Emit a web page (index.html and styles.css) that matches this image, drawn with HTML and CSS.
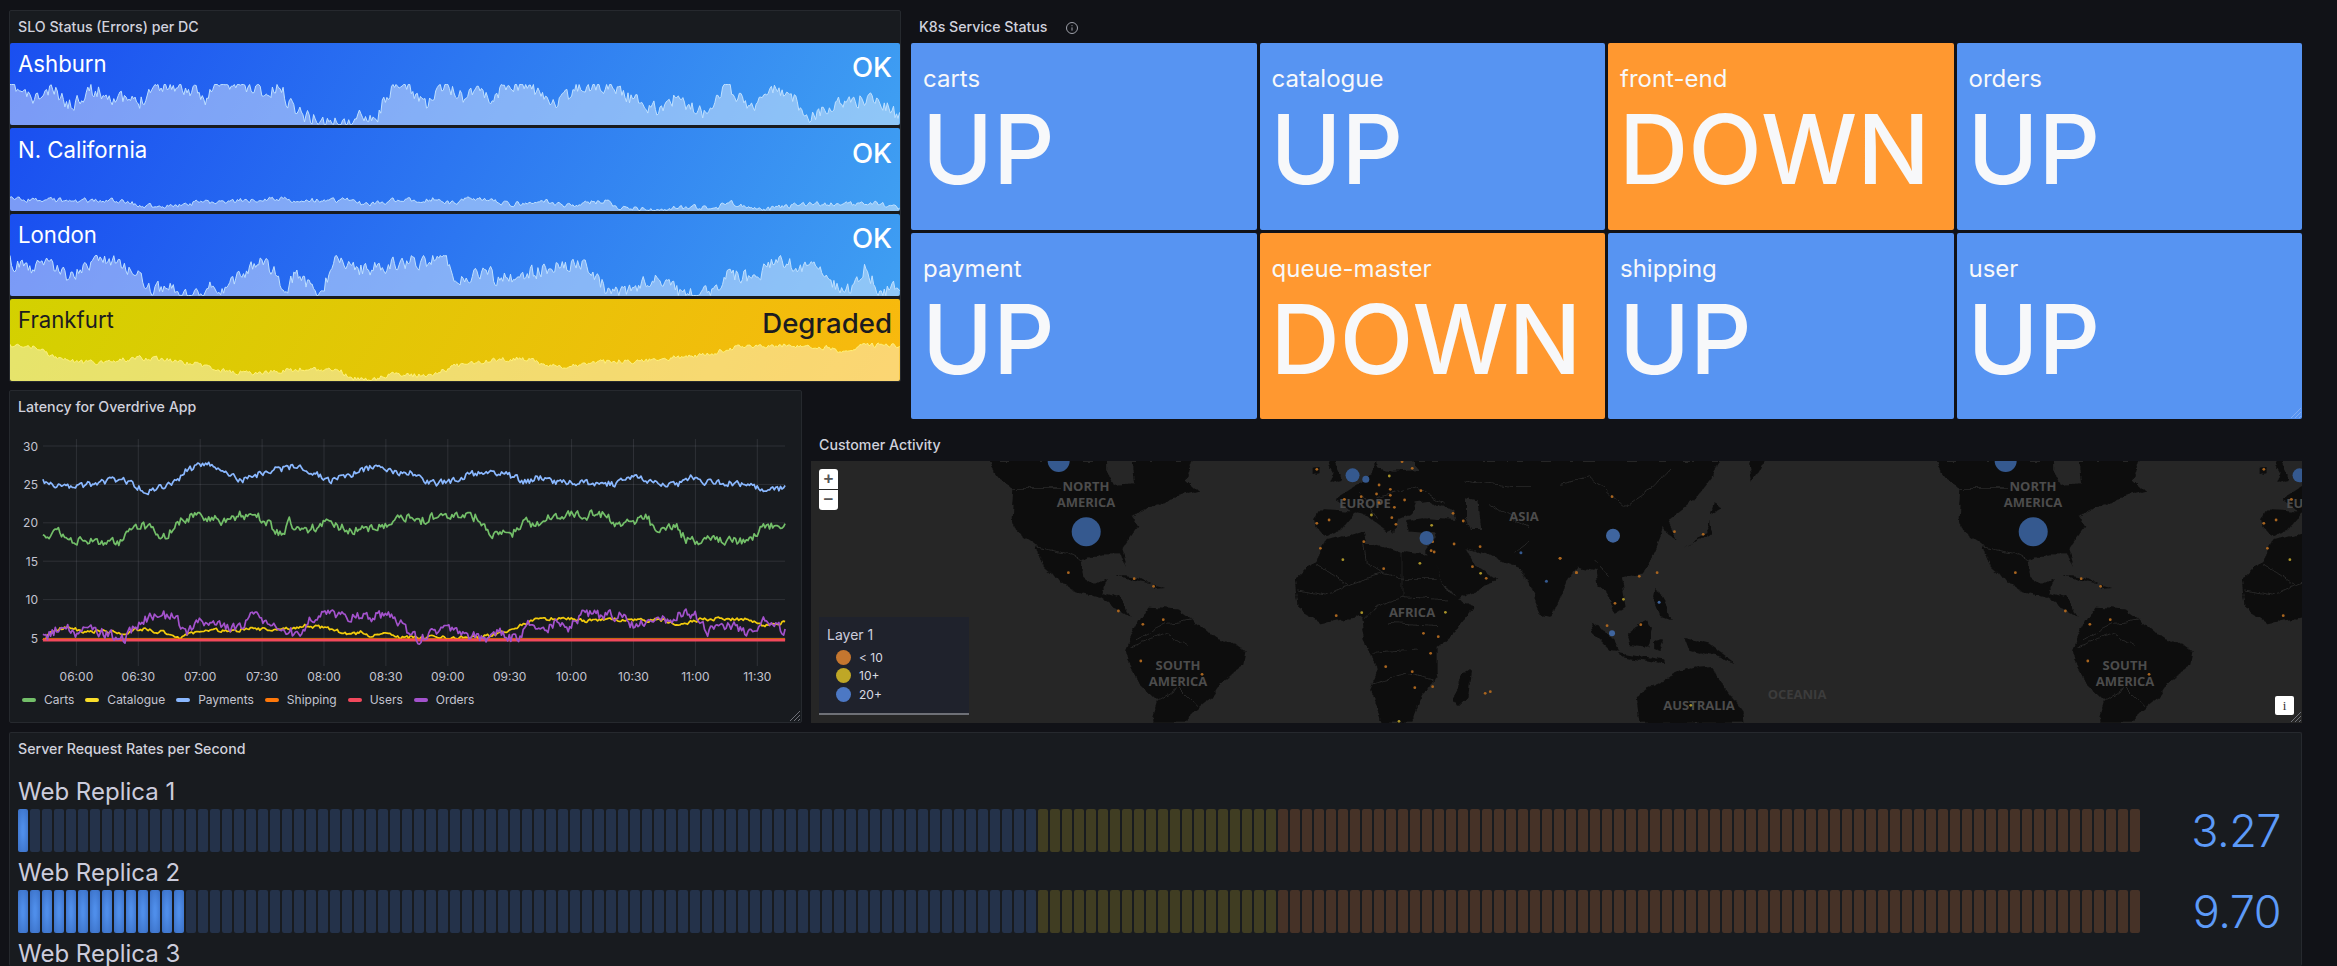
FILE: index.html
```html
<!DOCTYPE html>
<html lang="en">

<head>
    <meta charset="UTF-8" />
    <title>Overdrive App Dashboard</title>
    <link rel="stylesheet" href="styles.css">
</head>

<body>

    <div class="dash">

        <section class="panel slo">
            <h2 class="panel-title">SLO Status (Errors) per DC</h2>
            <div class="slo-rows">
                <div class="slo-row slo-ok">
                    <div class="slo-head"><span class="slo-name">Ashburn</span><span class="slo-value">OK</span></div>
                    <svg class="spark" id="spark-ashburn" width="890" height="41"></svg>
                </div>
                <div class="slo-row slo-ok">
                    <div class="slo-head"><span class="slo-name">N. California</span><span class="slo-value">OK</span></div>
                    <svg class="spark" id="spark-california" width="890" height="41"></svg>
                </div>
                <div class="slo-row slo-ok">
                    <div class="slo-head"><span class="slo-name">London</span><span class="slo-value">OK</span></div>
                    <svg class="spark" id="spark-london" width="890" height="41"></svg>
                </div>
                <div class="slo-row slo-warn">
                    <div class="slo-head"><span class="slo-name">Frankfurt</span><span class="slo-value">Degraded</span></div>
                    <svg class="spark" id="spark-frankfurt" width="890" height="41"></svg>
                </div>
            </div>
        </section>

        <section class="k8s">
            <h2 class="panel-title k8s-title">K8s Service Status
                <svg class="info-icon" width="14" height="14" viewBox="0 0 14 14">
                    <circle cx="7" cy="7" r="5.5" fill="none" stroke="#9fa1aa" stroke-width="1"></circle>
                    <path d="M7 6.4v3.2M7 4.2v1" stroke="#9fa1aa" stroke-width="1"></path>
                </svg>
            </h2>
            <div class="tiles">
                <div class="tile"><div class="tile-name">carts</div><div class="tile-value">UP</div></div>
                <div class="tile"><div class="tile-name">catalogue</div><div class="tile-value">UP</div></div>
                <div class="tile tile-down"><div class="tile-name">front-end</div><div class="tile-value">DOWN</div></div>
                <div class="tile"><div class="tile-name">orders</div><div class="tile-value">UP</div></div>
                <div class="tile"><div class="tile-name">payment</div><div class="tile-value">UP</div></div>
                <div class="tile tile-down"><div class="tile-name">queue-master</div><div class="tile-value">DOWN</div></div>
                <div class="tile"><div class="tile-name">shipping</div><div class="tile-value">UP</div></div>
                <div class="tile"><div class="tile-name">user</div><div class="tile-value">UP</div></div>
            </div>
            <svg class="resize-handle tile-handle" width="12" height="12" viewBox="0 0 12 12">
                <path d="M1 11 11 1M5 11l6-6M9 11l2-2" stroke="#9dbff5" fill="none"></path>
            </svg>
        </section>

        <section class="panel latency">
            <h2 class="panel-title">Latency for Overdrive App</h2>
            <svg class="latency-chart" id="latency-chart" width="791" height="262"></svg>
            <div class="legend">
                <span class="legend-item"><i class="swatch swatch-green"></i>Carts</span>
                <span class="legend-item"><i class="swatch swatch-yellow"></i>Catalogue</span>
                <span class="legend-item"><i class="swatch swatch-blue"></i>Payments</span>
                <span class="legend-item"><i class="swatch swatch-orange"></i>Shipping</span>
                <span class="legend-item"><i class="swatch swatch-red"></i>Users</span>
                <span class="legend-item"><i class="swatch swatch-purple"></i>Orders</span>
            </div>
            <svg class="resize-handle" width="12" height="12" viewBox="0 0 12 12">
                <path d="M1 11 11 1M5 11l6-6M9 11l2-2" stroke="#6e7077" fill="none"></path>
            </svg>
        </section>

        <section class="activity">
            <h2 class="panel-title activity-title">Customer Activity</h2>
            <div class="map">
                <svg class="map-svg" id="map-svg" width="1491" height="262">
                    <defs>
                        <filter id="rough" x="-5%" y="-5%" width="110%" height="110%">
                            <feTurbulence type="fractalNoise" baseFrequency=".07" numOctaves="3" seed="4"></feTurbulence>
                            <feDisplacementMap in="SourceGraphic" scale="7" xChannelSelector="R" yChannelSelector="G"></feDisplacementMap>
                        </filter>
                        <g id="world">
                            <g filter="url(#rough)">
                                <!-- americas, europe, africa, west asia -->
                                <g transform="translate(-11,-41) scale(.5102,.3333)">
                                    <path class="land" d="M372,123 L385,170 L418,205 L415,295 L435,350 L465,385 L478,430 L510,490 L550,520 L590,530 L615,560 L650,590 L640,570 L625,530 L590,520 L605,480 L575,495 L555,470 L552,420 L590,400 L625,400 L640,440 L632,385 L665,320 L650,290 L690,262 L745,225 L782,215 L755,175 L770,123 Z"></path>
                                    <path class="land" d="M460,380 L472,385 L492,460 L478,440 Z"></path>
                                    <path class="land" d="M620,465 L650,468 L690,490 L655,482 Z M692,497 L716,504 L695,506 Z"></path>
                                    <path class="land" d="M640,690 L650,640 L670,590 L685,560 L740,565 L770,600 L800,640 L875,690 L870,740 L830,780 L800,840 L770,880 L760,908 L690,908 L700,840 L660,780 L640,700 Z"></path>
                                    <path class="land" d="M970,480 L1010,420 L1030,360 L1105,335 L1110,370 L1180,395 L1235,405 L1270,520 L1320,560 L1280,640 L1250,680 L1250,760 L1210,850 L1200,908 L1140,908 L1118,810 L1130,750 L1105,660 L1100,590 L1020,610 L975,560 Z"></path>
                                    <path class="land" d="M1300,760 L1315,750 L1310,830 L1290,860 L1280,840 Z"></path>
                                    <path class="land" d="M1010,290 L1020,268 L1085,272 L1090,275 L1060,330 L1030,350 L1012,320 Z"></path>
                                    <path class="land" d="M1050,240 L1090,195 L1125,160 L1130,123 L1600,123 L1600,430 L1560,450 L1520,440 L1500,490 L1470,590 L1450,585 L1432,500 L1415,450 L1385,425 L1340,400 L1305,385 L1330,440 L1365,480 L1290,540 L1262,490 L1238,420 L1225,392 L1240,362 L1245,340 L1195,335 L1190,300 L1225,295 L1285,300 L1280,275 L1235,245 L1205,250 L1198,285 L1170,298 L1165,335 L1140,290 L1125,262 L1165,322 L1150,335 L1105,280 L1085,275 Z"></path>
                                    <path class="land" d="M1035,123 L1050,123 L1062,180 L1035,186 L1044,160 Z M1005,140 L1020,138 L1020,160 L1005,162 Z"></path>
                                    <path class="sea" d="M600,123 L650,123 L655,190 L615,195 L600,150 Z"></path>
                                    <path class="sea" d="M1130,123 L1200,123 L1215,150 L1160,155 L1135,145 Z"></path>
                                    <path class="sea" d="M1305,235 L1330,240 L1335,330 L1315,330 L1305,290 Z"></path>
                                    <path class="border" d="M418,205 L512,205 M455,378 L520,400 L555,425"></path>
                                    <path class="border" d="M1010,430 L1075,495 L1140,460 L1180,475 L1250,475 M1105,370 L1110,430 L1140,460 M1180,395 L1180,530 M975,510 L1030,525 L1075,495 M1105,600 L1130,560 L1180,530 L1270,540 M1155,610 L1250,620 M1120,700 L1210,690 M1120,790 L1190,760 L1240,780"></path>
                                    <path class="border" d="M660,660 L720,610 L770,600 M650,680 L720,640 L760,680 M700,840 L740,800 L780,860"></path>
                                    <path class="border" d="M1300,180 L1400,200 L1505,200 L1560,123 M1350,250 L1450,340 L1400,400 M1130,230 L1210,200 L1260,250 M1100,220 L1130,290"></path>
                                </g>
                                <!-- east asia and the pacific -->
                                <g transform="translate(749,-41) scale(.4955,.3333)">
                                    <path class="land" d="M-60,123 L320,123 L305,175 L268,240 L220,300 L235,358 L205,325 L190,400 L170,460 L125,472 L132,560 L112,582 L92,510 L78,500 L72,425 L30,430 L-60,440 Z"></path>
                                    <path class="land" d="M380,123 L415,123 L385,185 Z"></path>
                                    <path class="land" d="M250,385 L295,340 L300,300 L308,342 L262,372 Z M310,250 L325,265 L305,285 Z"></path>
                                    <path class="land" d="M192,505 L205,520 L225,600 L200,590 L190,540 Z"></path>
                                    <path class="land" d="M135,640 L175,600 L185,620 L180,680 L140,675 Z"></path>
                                    <path class="land" d="M60,605 L90,630 L118,692 L100,690 L65,640 Z"></path>
                                    <path class="land" d="M115,700 L210,718 L212,730 L125,712 Z"></path>
                                    <path class="land" d="M190,660 L210,655 L205,695 L190,690 Z"></path>
                                    <path class="land" d="M250,658 L300,670 L352,732 L300,700 L262,690 Z"></path>
                                    <path class="land" d="M155,830 L240,752 L280,740 L310,738 L330,800 L368,870 L370,908 L160,908 Z"></path>
                                    <path class="border" d="M0,190 L60,170 L130,260 L190,200 L220,150 M70,420 L100,470"></path>
                                </g>
                            </g>
                            <g class="map-labels">
                                <text x="275" y="30">NORTH</text>
                                <text x="275" y="46">AMERICA</text>
                                <text x="554" y="47">EUROPE</text>
                                <text x="713" y="60">ASIA</text>
                                <text x="601" y="156">AFRICA</text>
                                <text x="367" y="209">SOUTH</text>
                                <text x="367" y="225">AMERICA</text>
                                <text x="888" y="249">AUSTRALIA</text>
                            </g>
                        </g>
                    </defs>
                    <use href="#world"></use>
                    <use href="#world" x="947"></use>
                    <text class="ocean-label" x="986" y="238">OCEANIA</text>
                    <g id="map-dots"></g>
                </svg>
                <div class="zoom-ctl">
                    <button class="zoom-btn">+</button>
                    <button class="zoom-btn">−</button>
                </div>
                <div class="map-legend">
                    <div class="map-legend-title">Layer 1</div>
                    <div class="map-legend-row"><i class="dot dot-orange"></i>&lt; 10</div>
                    <div class="map-legend-row"><i class="dot dot-yellow"></i>10+</div>
                    <div class="map-legend-row"><i class="dot dot-blue"></i>20+</div>
                </div>
                <button class="map-info">i</button>
                <svg class="resize-handle" width="12" height="12" viewBox="0 0 12 12">
                    <path d="M1 11 11 1M5 11l6-6M9 11l2-2" stroke="#6e7077" fill="none"></path>
                </svg>
            </div>
        </section>

        <section class="panel requests">
            <h2 class="panel-title">Server Request Rates per Second</h2>
            <div class="gauges">
                <div class="gauge">
                    <div class="gauge-name">Web Replica 1</div>
                    <div class="gauge-bar">
                        <div class="cells" data-lit="1"></div>
                        <div class="gauge-value">3.27</div>
                    </div>
                </div>
                <div class="gauge">
                    <div class="gauge-name">Web Replica 2</div>
                    <div class="gauge-bar">
                        <div class="cells" data-lit="14"></div>
                        <div class="gauge-value">9.70</div>
                    </div>
                </div>
                <div class="gauge">
                    <div class="gauge-name">Web Replica 3</div>
                </div>
            </div>
        </section>

    </div>

    <script src="chart.js"></script>
</body>

</html>
```

FILE: styles.css
```css
html,
body {
    height: 966px;
    overflow: hidden;
}

body {
    margin: 0;
    background-color: #111217;
    color: #ccccdc;
    font-family: Inter, "Liberation Sans", sans-serif;
}

.dash {
    display: grid;
    grid-template-columns: 794px 100px 1399px;
    grid-template-rows: 372px 8px 29px 11px 293px auto;
    padding: 10px 0 0 9px;
}

.panel {
    position: relative;
    background-color: #181b1f;
    border: 1px solid #26292e;
    border-radius: 2px;
    box-sizing: border-box;
}

.panel-title {
    margin: 0;
    padding-left: 8px;
    height: 32px;
    line-height: 32px;
    font-size: 14.2px;
    font-weight: 500;
    color: #d0d1dc;
}

/* SLO */

.slo {
    grid-column: 1 / 3;
    grid-row: 1;
    margin-right: 2px;
    display: flex;
    flex-direction: column;
}

.slo-rows {
    flex: 1;
    min-height: 0;
    display: grid;
    grid-template-rows: repeat(4, minmax(0, 1fr));
    gap: 3px;
}

.slo-row {
    display: flex;
    flex-direction: column;
    justify-content: flex-end;
    border-radius: 2px;
    overflow: hidden;
}

.slo-ok {
    background: linear-gradient(120deg, #1a4ff0, #3f9ff2);
    color: #fff;
}

.slo-warn {
    background: linear-gradient(120deg, #d3d100, #f9b80e);
    color: #1c1c20;
}

.slo-head {
    height: 41px;
    box-sizing: border-box;
    display: flex;
    justify-content: space-between;
    padding: 7px 8px 0 8px;
}

.slo-name {
    font-size: 22.2px;
    line-height: 28px;
}

.slo-value {
    font-size: 27.6px;
    line-height: 34px;
    font-weight: 500;
}

.spark {
    display: block;
    flex-shrink: 0;
}

/* K8s */

.k8s {
    position: relative;
    grid-column: 3;
    grid-row: 1 / 4;
    padding-left: 8px;
}

.k8s-title {
    height: 33px;
    line-height: 33px;
}

.info-icon {
    vertical-align: -3px;
    margin-left: 14px;
}

.tiles {
    display: grid;
    grid-template-columns: repeat(4, 1fr);
    grid-template-rows: 187px 186px;
    gap: 3px;
}

.tile {
    background-color: #5794f2;
    color: #f7f8fa;
    border-radius: 2px;
    padding: 22px 12px 0;
    overflow: hidden;
}

.tile-down {
    background-color: #ff9830;
}

.tile-name {
    font-size: 24px;
    line-height: 28px;
}

.tile-value {
    font-size: 96px;
    font-weight: 500;
    line-height: 96px;
    margin-top: 8px;
    margin-left: -1px;
}

/* Latency */

.latency {
    grid-column: 1;
    grid-row: 3 / 6;
    margin-right: 1px;
}

.latency-chart {
    display: block;
}

.latency-chart text {
    font-family: Inter, "Liberation Sans", sans-serif;
    font-size: 12px;
    fill: #c3c4d0;
}

.legend {
    display: flex;
    gap: 11px;
    padding-left: 12px;
    margin-top: 7px;
    font-size: 12px;
    line-height: 16px;
    color: #c3c4d0;
}

.legend-item {
    display: flex;
    align-items: center;
}

.swatch {
    width: 14px;
    height: 4px;
    border-radius: 2px;
    margin-right: 8px;
}

.swatch-green { background-color: #73bf69; }
.swatch-yellow { background-color: #fade2a; }
.swatch-blue { background-color: #8ab8ff; }
.swatch-orange { background-color: #ff780a; }
.swatch-red { background-color: #f2495c; }
.swatch-purple { background-color: #a352cc; }

.resize-handle {
    position: absolute;
    right: 0;
    bottom: 0;
}

.tile-handle {
    opacity: 0.6;
}

/* Map */

.activity {
    grid-column: 2 / 4;
    grid-row: 3 / 6;
    padding-left: 8px;
    display: flex;
    flex-direction: column;
    justify-content: flex-end;
}

.activity-title {
    height: 31px;
    line-height: 29px;
}

.map {
    position: relative;
    height: 262px;
    background-color: #262626;
    overflow: hidden;
}

.map-svg {
    display: block;
}

.land { fill: #0c0c0c; }
.sea { fill: #262626; }

.border {
    fill: none;
    stroke: #272727;
    stroke-width: 1;
    vector-effect: non-scaling-stroke;
}

.map-labels text,
.ocean-label {
    font-family: "Open Sans", Inter, sans-serif;
    font-size: 13px;
    font-weight: 700;
    text-anchor: middle;
    fill: #4c4c4c;
}

.ocean-label {
    fill: #3c3c3c;
}

.zoom-ctl {
    position: absolute;
    left: 8px;
    top: 8px;
    display: flex;
    flex-direction: column;
    gap: 1px;
    border-radius: 3px;
    overflow: hidden;
}

.zoom-btn {
    width: 19px;
    height: 20px;
    padding: 0;
    border: none;
    background-color: #fff;
    color: #555;
    font-family: "Liberation Sans", sans-serif;
    font-size: 17px;
    font-weight: 700;
    line-height: 20px;
}

.map-legend {
    position: absolute;
    left: 8px;
    top: 156px;
    width: 150px;
    height: 98px;
    box-sizing: border-box;
    padding: 8px;
    background-color: #1f222c;
    border-bottom: 2px solid #6e7077;
}

.map-legend-title {
    font-size: 14px;
    line-height: 20px;
    margin-bottom: 3px;
}

.map-legend-row {
    display: flex;
    align-items: center;
    height: 18.5px;
    font-size: 12px;
    color: #d8d9e2;
}

.dot {
    width: 15px;
    height: 15px;
    border-radius: 50%;
    margin: 0 8px 0 9px;
}

.dot-orange { background-color: #c4762f; }
.dot-yellow { background-color: #bfa726; }
.dot-blue { background-color: #4c78c4; }

.map-info {
    position: absolute;
    right: 8px;
    bottom: 8px;
    width: 19px;
    height: 19px;
    padding: 0;
    border: none;
    border-radius: 2px;
    background-color: #fff;
    color: #333;
    font-size: 13px;
    font-family: "Liberation Serif", serif;
}

/* Bar gauges */

.requests {
    grid-column: 1 / 4;
    grid-row: 6;
    margin-top: 9px;
    height: 234px;
    border-bottom: none;
    overflow: hidden;
}

.gauges {
    padding: 6px 8px 0;
}

.gauge-name {
    line-height: 24px;
    font-size: 24px;
    margin-top: 9px;
    margin-bottom: 5px;
    color: #ccccdc;
}

.gauge-bar {
    display: flex;
    align-items: center;
}

.cells {
    display: flex;
    gap: 2px;
    flex-shrink: 0;
    height: 43px;
}

.cell {
    width: 10px;
    border-radius: 2px;
}

.cell-blue { background-color: #24324a; }
.cell-yellow { background-color: #403d22; }
.cell-orange { background-color: #463227; }

.cell-lit {
    background: radial-gradient(ellipse at center, #4f8eea 15%, #3a6fc4 100%);
}

.gauge-value {
    flex: 1;
    text-align: right;
    padding-right: 12px;
    font-size: 45px;
    line-height: 43px;
    font-weight: 300;
    letter-spacing: -0.5px;
    color: #5c9af8;
}
```

FILE: chart.js
```js
// Screenshot-read key points, with a seeded wobble so each series looks like live data.
function makeRandom(seed) {
    return function () {
        seed = (seed * 16807) % 2147483647;
        return seed / 2147483647;
    };
}

function interpolate(keys, x) {
    for (let i = 1; i < keys.length; i++) {
        if (x <= keys[i][0]) {
            const a = keys[i - 1];
            const b = keys[i];
            return a[1] + (b[1] - a[1]) * (x - a[0]) / (b[0] - a[0]);
        }
    }
    return keys[keys.length - 1][1];
}

function wobble(keys, step, amp, seed) {
    const random = makeRandom(seed);
    const first = keys[0][0];
    const last = keys[keys.length - 1][0];
    const points = [];
    let noise = 0;
    for (let x = first; x <= last; x += step) {
        noise = noise * 0.3 + (random() - 0.5) * amp;
        points.push([x, interpolate(keys, x) + noise]);
    }
    return points;
}

function toPath(points) {
    return points.map((p, i) => (i ? "L" : "M") + p[0].toFixed(1) + " " + p[1].toFixed(1)).join(" ");
}

function svgNode(name, attrs) {
    const node = document.createElementNS("http://www.w3.org/2000/svg", name);
    for (const key in attrs) {
        node.setAttribute(key, attrs[key]);
    }
    return node;
}

// Sparklines. x runs 18..1535 and y is measured up from the row's bottom edge, in zoomed pixels.
const sparks = [
    {
        id: "spark-ashburn", bottom: 375, amp: 40, seed: 11, stroke: "#bfe0ff",
        keys: [[18,255],[60,300],[90,270],[122,318],[150,270],[180,280],[200,295],[238,310],[260,258],[290,255],[320,270],[350,295],[370,255],[400,255],[440,265],[460,290],[475,255],[490,300],[520,345],[550,365],[600,372],[620,340],[645,350],[660,280],[690,255],[730,312],[760,255],[790,290],[815,255],[835,305],[860,258],[905,258],[925,295],[960,305],[985,260],[1050,258],[1075,295],[1130,335],[1140,290],[1200,340],[1235,255],[1280,320],[1320,270],[1350,290],[1380,350],[1440,305],[1495,295],[1535,355]]
    },
    {
        id: "spark-california", bottom: 632, amp: 14, seed: 23, stroke: "#bfe0ff",
        keys: [[18,598],[100,600],[190,600],[275,622],[340,605],[440,597],[600,600],[620,612],[680,600],[740,597],[770,610],[800,597],[840,600],[870,612],[930,600],[960,618],[1030,603],[1060,622],[1130,630],[1160,620],[1225,620],[1240,605],[1300,628],[1380,610],[1440,612],[1490,606],[1535,626]]
    },
    {
        id: "spark-london", bottom: 887, amp: 40, seed: 37, stroke: "#bfe0ff",
        keys: [[18,785],[50,805],[80,780],[120,830],[170,780],[200,785],[240,830],[260,860],[295,860],[305,882],[345,885],[355,845],[370,885],[400,840],[450,785],[490,860],[505,815],[545,885],[575,780],[610,810],[700,785],[760,780],[780,845],[830,810],[850,840],[990,785],[1010,815],[1040,880],[1090,860],[1115,825],[1165,885],[1220,880],[1240,820],[1290,835],[1320,780],[1400,805],[1440,885],[1475,800],[1500,885],[1535,850]]
    },
    {
        id: "spark-frankfurt", bottom: 1143, amp: 14, seed: 51, stroke: "#fff27c",
        keys: [[18,1040],[50,1038],[90,1068],[130,1085],[170,1090],[240,1073],[290,1080],[340,1095],[380,1112],[420,1120],[510,1108],[580,1112],[600,1135],[635,1140],[660,1125],[730,1125],[780,1098],[840,1078],[900,1075],[930,1095],[990,1100],[1010,1088],[1110,1080],[1170,1068],[1220,1060],[1240,1045],[1330,1035],[1400,1040],[1440,1055],[1470,1035],[1535,1038]]
    }
];

sparks.forEach(function (spark) {
    const svg = document.getElementById(spark.id);
    const points = wobble(spark.keys, 2.6, spark.amp, spark.seed).map(function (p) {
        const x = (p[0] - 18) / 1.704;
        const y = 41 - (spark.bottom - p[1]) / 3;
        return [x, Math.min(Math.max(y, 0.5), 40.5)];
    });
    const line = toPath(points);
    const end = points[points.length - 1][0].toFixed(1);
    svg.appendChild(svgNode("path", { d: line + " L" + end + " 41 L0 41 Z", fill: "rgba(255,255,255,.42)" }));
    svg.appendChild(svgNode("path", { d: line, fill: "none", stroke: spark.stroke, "stroke-width": 1 }));
});

// Latency chart
const latency = document.getElementById("latency-chart");
const gridColor = "rgba(204,204,220,.12)";

function valueY(value) {
    return 215 - (value - 5) * 7.68;
}

[5, 10, 15, 20, 25, 30].forEach(function (value) {
    const y = valueY(value);
    latency.appendChild(svgNode("line", { x1: 33, x2: 775, y1: y, y2: y, stroke: gridColor }));
    const label = svgNode("text", { x: 28, y: y + 4.5, "text-anchor": "end" });
    label.textContent = value;
    latency.appendChild(label);
});

["06:00", "06:30", "07:00", "07:30", "08:00", "08:30", "09:00", "09:30", "10:00", "10:30", "11:00", "11:30"].forEach(function (time, i) {
    const x = 66.4 + i * 61.9;
    latency.appendChild(svgNode("line", { x1: x, x2: x, y1: 16, y2: 243, stroke: gridColor }));
    const label = svgNode("text", { x: x, y: 257.5, "text-anchor": "middle" });
    label.textContent = time;
    latency.appendChild(label);
});

const series = [
    {
        color: "#73bf69", amp: 26, seed: 71,
        keys: [[83,465],[115,438],[140,472],[230,472],[250,430],[290,428],[320,462],[345,412],[375,395],[415,400],[425,420],[465,393],[495,393],[545,450],[560,415],[580,450],[630,415],[680,440],[740,425],[790,395],[810,415],[850,393],[925,400],[950,455],[1000,445],[1020,405],[1035,430],[1070,395],[1175,393],[1200,430],[1250,400],[1275,440],[1305,420],[1330,470],[1400,470],[1450,470],[1480,430],[1520,420]]
    },
    {
        color: "#f2cc0c", amp: 10, seed: 83,
        keys: [[83,770],[100,745],[130,725],[160,745],[200,740],[235,750],[270,735],[320,745],[340,765],[390,738],[450,740],[490,735],[560,735],[590,725],[640,735],[680,750],[700,745],[720,758],[745,745],[770,760],[830,760],[930,762],[960,750],[1000,730],[1035,705],[1110,705],[1130,712],[1150,705],[1200,708],[1280,708],[1320,722],[1360,705],[1450,705],[1475,725],[1520,715]]
    },
    {
        color: "#8ab8ff", amp: 18, seed: 97,
        keys: [[83,295],[140,312],[210,290],[240,290],[285,322],[340,295],[360,260],[400,235],[470,290],[510,265],[580,245],[640,290],[740,240],[760,265],[795,262],[835,300],[880,290],[910,270],[970,265],[1020,295],[1040,280],[1070,295],[1150,295],[1190,300],[1220,278],[1310,305],[1340,275],[1360,295],[1440,300],[1490,322],[1520,312]]
    },
    { color: "#ff780a", amp: 0, seed: 5, width: 2, keys: [[83,766],[1520,766]] },
    { color: "#f2495c", amp: 0, seed: 7, width: 2.5, keys: [[83,769],[1520,769]] },
    {
        color: "#a352cc", amp: 28, seed: 109,
        keys: [[83,765],[125,720],[150,755],[170,735],[240,765],[270,715],[305,692],[340,700],[360,745],[380,715],[420,725],[470,730],[490,692],[510,720],[550,730],[580,762],[600,710],[625,692],[700,700],[760,695],[790,745],[810,765],[870,730],[900,750],[940,765],[970,745],[985,760],[1005,765],[1025,715],[1060,735],[1080,705],[1100,740],[1125,692],[1200,695],[1230,730],[1265,705],[1290,710],[1320,692],[1345,692],[1370,740],[1420,725],[1460,750],[1475,700],[1520,740]]
    }
];

series.forEach(function (s) {
    const points = wobble(s.keys, 3, s.amp, s.seed).map(function (p) {
        return [p[0] / 1.936 - 10, p[1] / 3 - 39];
    });
    latency.appendChild(svgNode("path", {
        d: toPath(points),
        fill: "none",
        stroke: s.color,
        "stroke-width": s.width || 1.7,
        "stroke-linejoin": "round"
    }));
});

// Map markers: dots read from the two zoom crops, each with its own scale
const orange = "#a9651f";
const yellow = "#a8932a";
const westDots = [[1013,148],[1180,125],[1200,145],[1135,195],[1157,208],[1217,212],[1130,222],[1157,226],[1100,230],[1067,238],[1185,240],[1135,248],[1165,262],[1160,293],[1037,300],[1013,310],[1168,313],[1280,280],[1300,303],[1105,365],[1240,365],[1020,385],[1237,392],[1243,396],[1282,372],[1333,380],[1144,446],[1318,440],[1345,475],[1490,415],[1522,458],[526,458],[655,476],[693,499],[624,573],[672,613],[712,599],[668,723],[788,763],[1051,587],[1222,640],[1251,650],[1236,700],[1148,740],[1200,755],[1205,803],[1240,800],[1343,820],[1353,815]];
const westYellow = [[1155,168],[1120,285],[1238,316],[1064,419],[1215,430],[1334,460],[1101,578],[1265,577],[1174,904]];
const eastDots = [[105,230],[231,335],[289,343],[0,415],[33,458],[160,469],[196,458],[111,550],[95,617],[163,614]];
const eastYellow = [[128,538],[264,856]];
const westBubbles = [[507,123,11],[561,335,14.5],[1083,166,7],[1109,178,3.5],[1228,354,7],[1413,398,1.5],[1463,484,1.5]];
const eastBubbles = [[107,347,7],[105,640,3],[200,547,1.5]];

const mapDots = document.getElementById("map-dots");

function westX(x) { return x / 1.96 - 11; }
function eastX(x) { return x * 0.4955 + 749; }
function mapY(y) { return y / 3 - 41; }

function addDot(x, y, r, fill) {
    [0, 947].forEach(function (shift) {
        mapDots.appendChild(svgNode("circle", { cx: x + shift, cy: y, r: r, fill: fill }));
    });
}

westDots.forEach(d => addDot(westX(d[0]), mapY(d[1]), 1.4, orange));
westYellow.forEach(d => addDot(westX(d[0]), mapY(d[1]), 1.4, yellow));
eastDots.forEach(d => addDot(eastX(d[0]), mapY(d[1]), 1.4, orange));
eastYellow.forEach(d => addDot(eastX(d[0]), mapY(d[1]), 1.4, yellow));
westBubbles.forEach(d => addDot(westX(d[0]), mapY(d[1]), d[2], "#35598f"));
eastBubbles.forEach(d => addDot(eastX(d[0]), mapY(d[1]), d[2], "#3f659f"));

// Bar gauges: 85 blue, 20 yellow, 72 orange cells
document.querySelectorAll(".cells").forEach(function (bar) {
    const lit = Number(bar.dataset.lit);
    for (let i = 0; i < 177; i++) {
        const cell = document.createElement("div");
        let tone = "cell-orange";
        if (i < lit) {
            tone = "cell-lit";
        } else if (i < 85) {
            tone = "cell-blue";
        } else if (i < 105) {
            tone = "cell-yellow";
        }
        cell.className = "cell " + tone;
        bar.appendChild(cell);
    }
});
```
